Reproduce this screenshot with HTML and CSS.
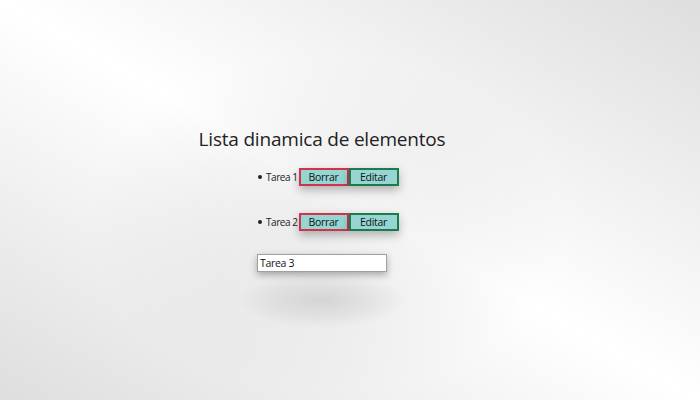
FILE: index.html
```html
<!DOCTYPE html>
<html lang="es">
<head>
<meta charset="utf-8">
<title>Lista dinamica</title>
<link rel="stylesheet" href="styles.css">
</head>
<body>
<div class="app">
  <h1 class="title">Lista dinamica de elementos</h1>
  <div class="list">
    <div class="item">
      <span class="dot"></span><span class="label">Tarea 1</span><button class="btn btn-del">Borrar</button><button class="btn btn-edit">Editar</button>
    </div>
    <div class="item">
      <span class="dot"></span><span class="label">Tarea 2</span><button class="btn btn-del">Borrar</button><button class="btn btn-edit">Editar</button>
    </div>
    <input class="field" type="text" value="Tarea 3">
    <div class="blob"></div>
  </div>
</div>
</body>
</html>
```

FILE: styles.css
```css
html, body {
  margin: 0;
  height: 100%;
}
body {
  background:
    radial-gradient(ellipse 240px 170px at 325px 225px, rgba(0, 0, 0, 0.06) 0%, rgba(0, 0, 0, 0.03) 55%, rgba(0, 0, 0, 0) 100%),
    linear-gradient(to top right, #dedede 0%, #ffffff 50%, #dedede 100%);
  font-family: "Open Sans", "Noto Sans", sans-serif;
  color: #222;
  overflow: hidden;
}
.app {
  display: flex;
  flex-direction: column;
  align-items: center;
  padding-top: 126px;
  padding-right: 56px;
}
.title {
  margin: 0;
  font-size: 19px;
  font-weight: 400;
  line-height: 26px;
  color: #222;
  letter-spacing: -0.2px;
}
.list {
  width: 130px;
  display: flex;
  flex-direction: column;
  align-items: flex-start;
  margin-top: 16px;
}
.item {
  display: flex;
  align-items: center;
  white-space: nowrap;
  height: 18px;
  margin-bottom: 27px;
  margin-left: 1px;
}
.dot {
  width: 4px;
  height: 4px;
  border-radius: 50%;
  background: #222;
  margin-right: 4px;
}
.label {
  font-size: 10px;
  color: #222;
  margin-right: 1px;
  letter-spacing: -0.45px;
}
.btn {
  width: 50px;
  height: 18px;
  padding: 0;
  margin: 0;
  font-family: inherit;
  font-size: 10.5px;
  letter-spacing: -0.3px;
  color: #111;
  background: #95d6d3;
  border: 2px solid #1d7a4b;
  box-shadow: 0 4px 10px rgba(0, 0, 0, 0.28);
  line-height: 14px;
}
.btn-del {
  border-color: #d3324c;
}
.field {
  box-sizing: border-box;
  width: 130px;
  height: 18px;
  margin: -4px 0 0 0;
  padding: 0 2px;
  border: 1px solid #a0a0a0;
  background: #fff;
  font-family: inherit;
  font-size: 10.5px;
  letter-spacing: -0.3px;
  color: #111;
  box-shadow: 0 3px 7px rgba(0, 0, 0, 0.3);
}
.blob {
  width: 170px;
  height: 56px;
  margin-left: -20px;
  margin-top: 0;
  background: radial-gradient(ellipse at center, rgba(0, 0, 0, 0.1) 0%, rgba(0, 0, 0, 0.05) 40%, rgba(0, 0, 0, 0) 70%);
}
```
